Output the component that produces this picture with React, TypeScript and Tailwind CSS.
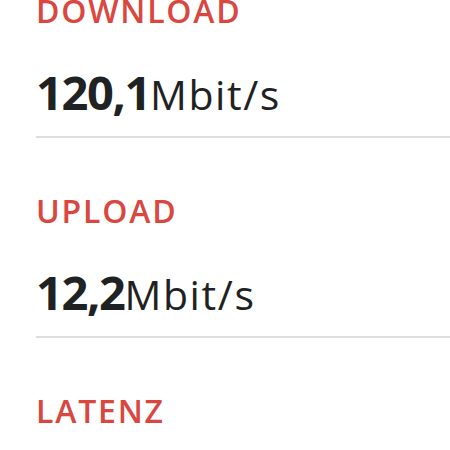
const stats = [
  { label: 'DOWNLOAD', value: '120,1', unit: 'Mbit/s' },
  { label: 'UPLOAD', value: '12,2', unit: 'Mbit/s' },
  { label: 'LATENZ', value: '18', unit: 'ms' },
]

export default function App() {
  return (
    <div className="h-[450px] w-[450px] overflow-hidden bg-white pl-[36px] font-['Open_Sans',sans-serif]">
      <div className="-mt-[7px]">
        {stats.map((s) => (
          <div key={s.label} className="h-[200px]">
            <div className="h-[36px] text-[32px] leading-[36px] font-semibold tracking-[1.8px] text-[#d9473f]">
              {s.label}
            </div>
            <div className="mt-[37px] h-[52px] leading-[52px] whitespace-nowrap text-[#1f2222]">
              <span className="text-[47px] font-bold tracking-[-1.4px]">{s.value}</span>
              <span className="text-[41px] tracking-[1.6px]">{s.unit}</span>
            </div>
            <div className="mt-[18px] h-[2px] bg-[#dddddd]" />
          </div>
        ))}
      </div>
    </div>
  )
}
